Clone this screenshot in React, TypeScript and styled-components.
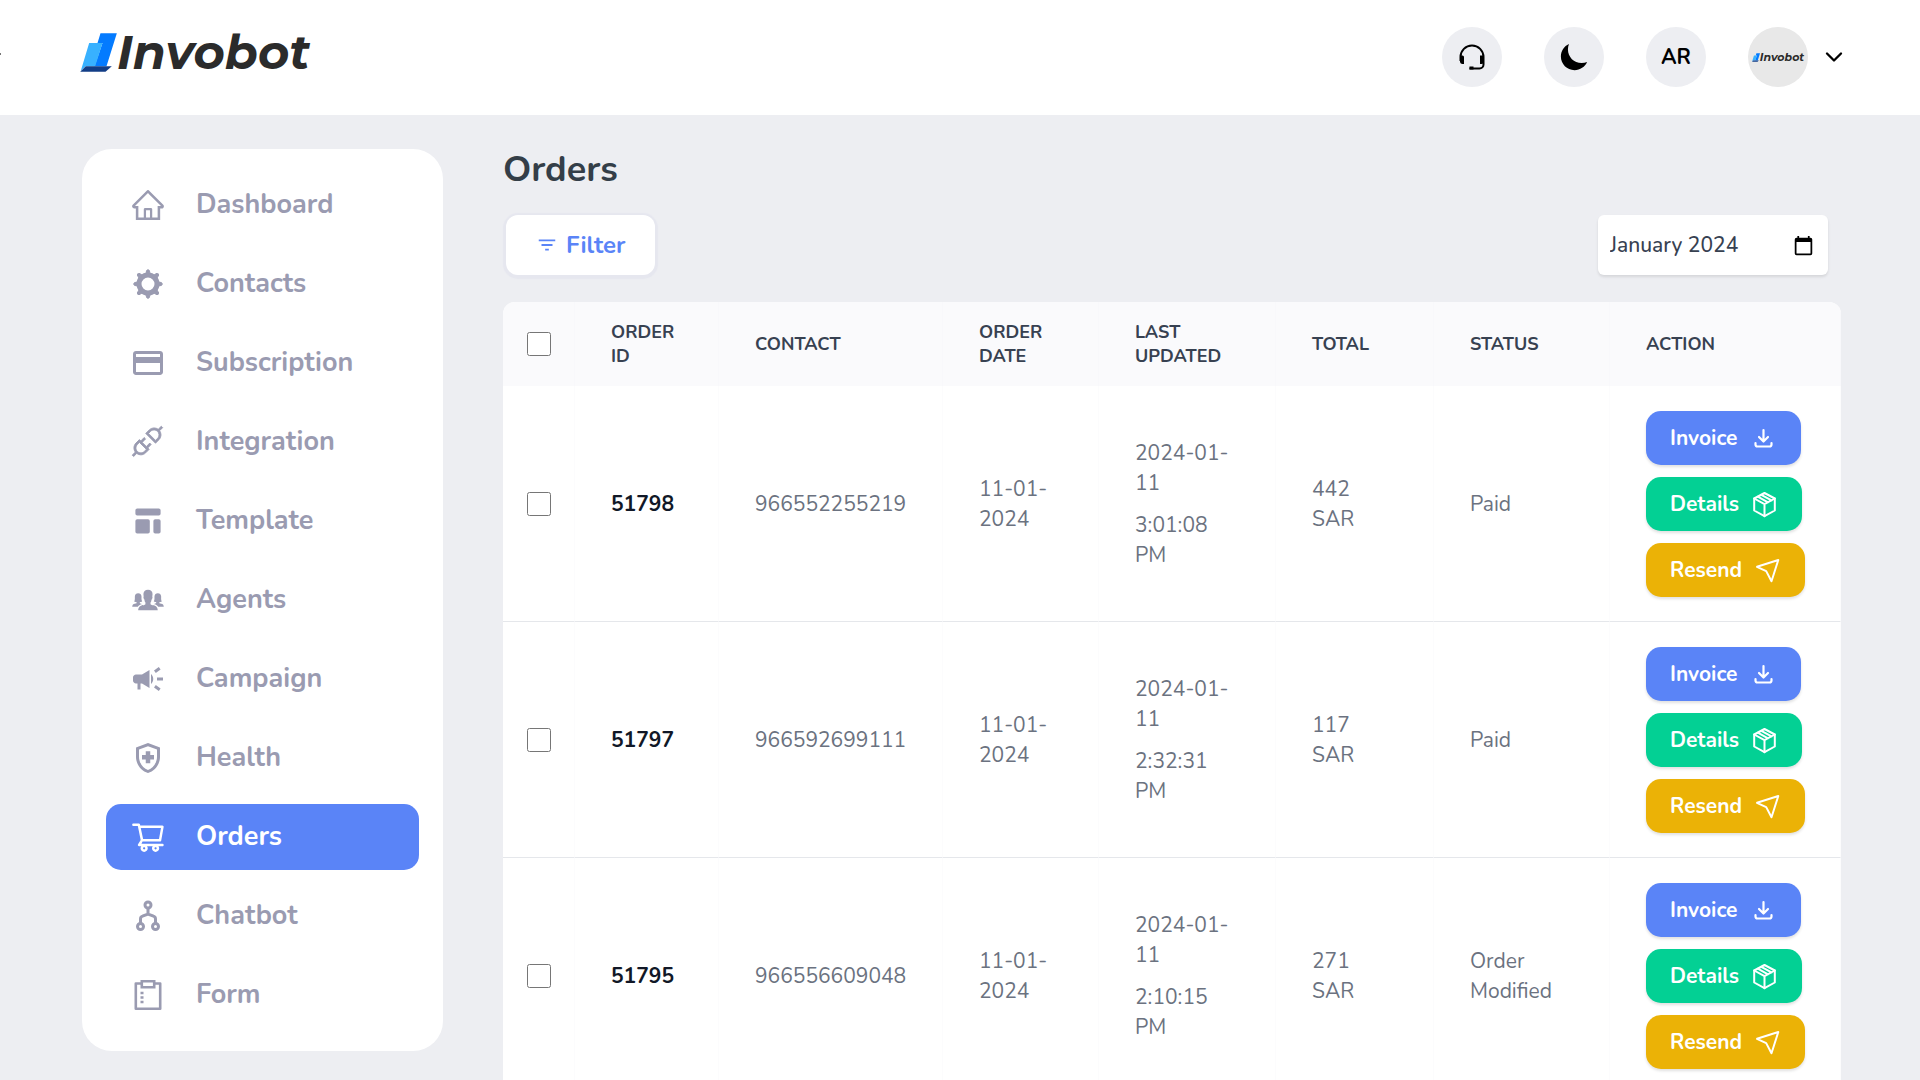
import React from "react";
import styled, { createGlobalStyle, css } from "styled-components";
import { AiOutlineHome, AiOutlineShoppingCart } from "react-icons/ai";
import { FiChevronDown } from "react-icons/fi";
import { HiTemplate } from "react-icons/hi";
import { IoIosPeople } from "react-icons/io";
import { IoMoonSharp } from "react-icons/io5";
import { MdCampaign, MdFilterList, MdOutlineHealthAndSafety, MdPayment } from "react-icons/md";
import { VscDebugDisconnect } from "react-icons/vsc";

const color = {
  page: "#edeef2",
  surface: "#ffffff",
  primary: "#5a84f7",
  success: "#03d094",
  warning: "#ebb206",
  nav: "#9a9bb1",
  heading: "#374151",
  body: "#6b7280",
  strong: "#111827",
};

const GlobalStyle = createGlobalStyle`
  *, *::before, *::after { box-sizing: border-box; }
  body {
    margin: 0;
    background: ${color.page};
    color: ${color.body};
    font-family: "Nunito", "Lato", sans-serif;
    font-size: 21px;
    line-height: 30px;
  }
  button, input { font: inherit; }
`;

/* ---------- header ---------- */

const Header = styled.header`
  position: relative;
  display: flex;
  align-items: center;
  justify-content: space-between;
  height: 115px;
  padding: 0 72px 2px 80px;
  background: ${color.surface};

  &::before {
    content: "";
    position: absolute;
    left: 0;
    top: 53px;
    width: 1px;
    height: 2px;
    background: #777;
  }
`;

const Brand = styled.a<{ $small?: boolean }>`
  display: flex;
  align-items: flex-end;
  color: #2b2b2b;
  font-family: "Montserrat", "Lato", sans-serif;
  font-style: italic;
  font-weight: 700;
  text-decoration: none;
  font-size: ${(p) => (p.$small ? 11 : 48)}px;
  line-height: ${(p) => (p.$small ? 10 : 40)}px;
  padding-bottom: ${(p) => (p.$small ? 0 : 10)}px;

  svg {
    width: ${(p) => (p.$small ? 8 : 37)}px;
    height: ${(p) => (p.$small ? 9 : 39)}px;
  }
`;

const HeaderActions = styled.div`
  display: flex;
  align-items: center;
  gap: 42px;
`;

const RoundButton = styled.button`
  display: flex;
  align-items: center;
  justify-content: center;
  width: 60px;
  height: 60px;
  padding: 0;
  border: 0;
  border-radius: 50%;
  background: ${color.page};
  color: #000;
  font-weight: 700;
`;

const Account = styled.button`
  display: flex;
  align-items: center;
  gap: 12px;
  padding: 0;
  border: 0;
  background: none;
  color: #000;
`;

const Avatar = styled.span`
  display: flex;
  align-items: center;
  justify-content: center;
  width: 60px;
  height: 60px;
  border-radius: 50%;
  background: #e8e8e8;
`;

/* ---------- layout ---------- */

const Page = styled.div`
  display: flex;
  align-items: flex-start;
  gap: 60px;
  padding: 34px 79px 48px 82px;
`;

const Sidebar = styled.nav`
  flex: 0 0 361px;
  padding: 23px 24px;
  border-radius: 30px;
  background: ${color.surface};
`;

const NavList = styled.ul`
  display: flex;
  flex-direction: column;
  gap: 13px;
  margin: 0;
  padding: 0;
  list-style: none;
`;

const NavLink = styled.a<{ $active?: boolean }>`
  display: flex;
  align-items: center;
  gap: 30px;
  height: 66px;
  padding: 0 24px;
  border-radius: 15px;
  color: ${color.nav};
  font-size: 27px;
  font-weight: 700;
  line-height: 36px;
  text-decoration: none;

  svg {
    flex: none;
    width: 36px;
    height: 36px;
  }

  ${(p) =>
    p.$active &&
    css`
      background: ${color.primary};
      color: #fff;
    `}
`;

const PlugIcon = styled(VscDebugDisconnect)`
  overflow: visible;
  stroke-width: 0.4;
`;

const Main = styled.main`
  flex: 1;
  min-width: 0;
`;

const Title = styled.h1`
  margin: 0 0 24px;
  color: #343e48;
  font-size: 36px;
  font-weight: 700;
  line-height: 42px;
`;

const Toolbar = styled.div`
  display: flex;
  align-items: center;
  justify-content: space-between;
  margin-bottom: 27px;
  padding: 0 13px 0 3px;
`;

const FilterButton = styled.button`
  display: flex;
  align-items: center;
  gap: 8px;
  height: 60px;
  padding: 0 30px;
  border: 0;
  border-radius: 12px;
  background: ${color.surface};
  box-shadow: 0 1px 1px 3px #e6e7ef;
  color: ${color.primary};
  font-size: 24px;
  font-weight: 700;
`;

const MonthField = styled.div`
  display: flex;
  align-items: center;
  width: 230px;
  height: 60px;
  padding: 0 12px;
  border-radius: 6px;
  background: ${color.surface};
  box-shadow: 0 2px 3px rgba(0, 0, 0, 0.1);
`;

const MonthInput = styled.input`
  flex: 1;
  min-width: 0;
  padding: 0;
  border: 0;
  background: none;
  color: ${color.heading};
  font-weight: 500;
`;

const PickerButton = styled.button`
  display: flex;
  padding: 0 2px;
  border: 0;
  background: none;
  color: #000;
`;

/* ---------- table ---------- */

const TableCard = styled.div`
  overflow: hidden;
  border-radius: 12px;
  background: ${color.surface};
`;

const Table = styled.table`
  width: 100%;
  table-layout: fixed;
  border-spacing: 0;
  text-align: left;
`;

const HeadCell = styled.th`
  padding: 18px 36px;
  border-right: 1px solid #f8f8fb;
  background: #fafafc;
  color: ${color.heading};
  font-size: 18px;
  font-weight: 700;
  line-height: 24px;
  text-transform: uppercase;
`;

const Cell = styled.td`
  padding: 25px 36px 24px;
  border-right: 1px solid #fcfcfd;
  border-bottom: 1px solid #e5e7eb;
`;

const CheckHead = styled(HeadCell)`
  padding: 0;
  text-align: center;
`;

const CheckCell = styled(Cell)`
  padding: 0;
  text-align: center;
`;

const IdCell = styled(Cell)`
  color: ${color.strong};
  font-weight: 700;
`;

const Checkbox = styled.input`
  display: block;
  width: 24px;
  height: 24px;
  margin: 0 auto;
`;

const Line = styled.span`
  display: block;
`;

const Stamp = styled.div`
  display: grid;
  gap: 12px;
`;

const Actions = styled.div`
  display: flex;
  flex-direction: column;
  align-items: flex-start;
  gap: 12px;
`;

const ActionButton = styled.button<{ $tone: "primary" | "success" | "warning" }>`
  display: flex;
  align-items: center;
  gap: 12px;
  height: 54px;
  padding: 0 24px;
  border: 0;
  border-radius: 15px;
  background: ${(p) => color[p.$tone]};
  box-shadow: 0 2px 3px rgba(0, 0, 0, 0.12);
  color: #fff;
  font-weight: 700;
`;

/* ---------- icons ---------- */

const BrandMark = () => (
  <svg viewBox="241 94 110 117" aria-hidden="true">
    <path d="M302 95h49l-31 99h-36l24-70h-15z" fill="#047bff" />
    <path d="M268 124h40l-22 70h-28l-15 13z" fill="#38b1ff" />
    <path d="M258 194h78l-19 16h-76z" fill="#123d86" />
  </svg>
);

const HeadsetIcon = () => (
  <svg width="26" height="26" viewBox="0 0 26 26" fill="none" stroke="currentColor" strokeWidth="2" aria-hidden="true">
    <path d="M1.5 17v-4a11.5 11.5 0 0 1 23 0v7.5a4 4 0 0 1-4 4H10.5" />
    <path d="M1 11.5h2.500a1.500 1.500 0 0 1 1.500 1.500v7H3.500A2.500 2.500 0 0 1 1 18zM25 11.500h-4V20h1.500A2.500 2.500 0 0 0 25 18z" fill="currentColor" stroke="none" />
    <path d="M10.5 22.500h4v3h-4z" fill="currentColor" stroke="none" />
  </svg>
);

const GearIcon = () => (
  <svg viewBox="0 0 36 36" fill="none" stroke="currentColor" aria-hidden="true">
    <circle cx="18" cy="18" r="9" strokeWidth="5" />
    {[0, 45, 90, 135, 180, 225, 270, 315].map((angle) => (
      <path key={angle} d="M15.8 8.500L16.600 4.500Q18 2.800 19.400 4.500L20.200 8.500z" fill="currentColor" strokeWidth="1" strokeLinejoin="round" transform={`rotate(${angle} 18 18)`} />
    ))}
  </svg>
);

const BranchIcon = () => (
  <svg viewBox="0 0 36 36" fill="none" stroke="currentColor" strokeWidth="3" aria-hidden="true">
    <circle cx="18" cy="7" r="3" />
    <circle cx="10.5" cy="28.5" r="3" />
    <circle cx="25.5" cy="28.5" r="3" />
    <path d="M18 10V16.500M10.500 25.500v-4.500a3 3 0 0 1 2-2.800L18 16l5.500 2.200a3 3 0 0 1 2 2.800V25.500" />
  </svg>
);

const FormIcon = () => (
  <svg viewBox="0 0 36 36" fill="none" stroke="currentColor" strokeWidth="2.6" aria-hidden="true">
    <path d="M12 6.500H5.800v25.200h24.400V6.500H24" strokeLinejoin="round" />
    <path d="M11.800 4.300h12.400v6H11.800z" />
    <path d="M10.500 16h3M10.500 20.500h3M10.500 25h3" />
  </svg>
);

const CalendarIcon = () => (
  <svg width="21" height="21" viewBox="0 0 24 24" fill="currentColor" aria-hidden="true">
    <path d="M20 3h-1V1h-2v2H7V1H5v2H4a2 2 0 0 0-2 2v16a2 2 0 0 0 2 2h16a2 2 0 0 0 2-2V5a2 2 0 0 0-2-2zm0 18H4V8h16z" />
  </svg>
);

const DownloadIcon = () => (
  <svg width="27" height="27" viewBox="0 0 27 27" fill="none" stroke="currentColor" strokeWidth="2.2" strokeLinecap="round" strokeLinejoin="round" aria-hidden="true">
    <path d="M13.500 5v11M9 12l4.500 4.500L18 12" />
    <path d="M5.500 18v1.500a2 2 0 0 0 2 2h12a2 2 0 0 0 2-2V18" />
  </svg>
);

const BoxIcon = () => (
  <svg width="27" height="27" viewBox="0 0 27 27" fill="none" stroke="currentColor" strokeWidth="2" strokeLinecap="round" strokeLinejoin="round" aria-hidden="true">
    <path d="M13.500 2l10.300 5.500v12L13.500 25.200 3.200 19.500v-12z" />
    <path d="M3.200 7.500l10.300 5.700 10.300-5.700M13.500 13.200v12M10.300 3.800l10.200 5.600M6.800 5.700L17 11.300" />
  </svg>
);

const SendIcon = () => (
  <svg width="27" height="27" viewBox="0 0 27 27" fill="none" stroke="currentColor" strokeWidth="2" strokeLinejoin="round" aria-hidden="true">
    <path d="M3 9.800L24.300 3l-6.800 21.300-5.300-10.200z" />
  </svg>
);

/* ---------- data ---------- */

const navItems = [
  { label: "Dashboard", icon: <AiOutlineHome /> },
  { label: "Contacts", icon: <GearIcon /> },
  { label: "Subscription", icon: <MdPayment /> },
  { label: "Integration", icon: <PlugIcon /> },
  { label: "Template", icon: <HiTemplate /> },
  { label: "Agents", icon: <IoIosPeople /> },
  { label: "Campaign", icon: <MdCampaign /> },
  { label: "Health", icon: <MdOutlineHealthAndSafety /> },
  { label: "Orders", icon: <AiOutlineShoppingCart />, active: true },
  { label: "Chatbot", icon: <BranchIcon /> },
  { label: "Form", icon: <FormIcon /> },
];

const columns = [
  { label: "Order ID", width: 144 },
  { label: "Contact", width: 224 },
  { label: "Order Date", width: 156 },
  { label: "Last Updated", width: 177 },
  { label: "Total", width: 158 },
  { label: "Status", width: 176 },
  { label: "Action", width: 231 },
];

const orders = [
  { id: "51798", contact: "966552255219", date: "11-01-2024", day: "2024-01-11", time: "3:01:08", total: "442", status: "Paid" },
  { id: "51797", contact: "966592699111", date: "11-01-2024", day: "2024-01-11", time: "2:32:31", total: "117", status: "Paid" },
  { id: "51795", contact: "966556609048", date: "11-01-2024", day: "2024-01-11", time: "2:10:15", total: "271", status: "Order Modified" },
];

export default function App() {
  return (
    <>
      <GlobalStyle />
      <Header>
        <Brand href="#">
          <BrandMark />
          Invobot
        </Brand>
        <HeaderActions>
          <RoundButton type="button" aria-label="Support"><HeadsetIcon /></RoundButton>
          <RoundButton type="button" aria-label="Dark mode"><IoMoonSharp size={30} /></RoundButton>
          <RoundButton type="button">AR</RoundButton>
          <Account type="button" aria-label="Account menu">
            <Avatar>
              <Brand as="span" $small>
                <BrandMark />
                Invobot
              </Brand>
            </Avatar>
            <FiChevronDown size={28} />
          </Account>
        </HeaderActions>
      </Header>
      <Page>
        <Sidebar aria-label="Main">
          <NavList>
            {navItems.map((item) => (
              <li key={item.label}>
                <NavLink href="#" $active={item.active} aria-current={item.active ? "page" : undefined}>
                  {item.icon}
                  {item.label}
                </NavLink>
              </li>
            ))}
          </NavList>
        </Sidebar>
        <Main>
          <Title>Orders</Title>
          <Toolbar>
            <FilterButton type="button">
              <MdFilterList size={22} />
              Filter
            </FilterButton>
            <MonthField>
              <MonthInput type="text" aria-label="Month" defaultValue="January 2024" />
              <PickerButton type="button" aria-label="Show month picker"><CalendarIcon /></PickerButton>
            </MonthField>
          </Toolbar>
          <TableCard>
            <Table>
              <colgroup>
                <col width={72} />
                {columns.map((c) => (
                  <col key={c.label} width={c.width} />
                ))}
              </colgroup>
              <thead>
                <tr>
                  <CheckHead scope="col"><Checkbox type="checkbox" aria-label="Select all orders" /></CheckHead>
                  {columns.map((c) => (
                    <HeadCell key={c.label} scope="col">
                      {c.label.split(" ").map((word) => (
                        <Line key={word}>{word}</Line>
                      ))}
                    </HeadCell>
                  ))}
                </tr>
              </thead>
              <tbody>
                {orders.map((o) => (
                  <tr key={o.id}>
                    <CheckCell><Checkbox type="checkbox" aria-label={`Select order ${o.id}`} /></CheckCell>
                    <IdCell>{o.id}</IdCell>
                    <Cell>{o.contact}</Cell>
                    <Cell>{o.date}</Cell>
                    <Cell>
                      <Stamp>
                        <span>{o.day}</span>
                        <span>
                          <Line>{o.time}</Line>
                          <Line>PM</Line>
                        </span>
                      </Stamp>
                    </Cell>
                    <Cell>
                      <Line>{o.total}</Line>
                      <Line>SAR</Line>
                    </Cell>
                    <Cell>{o.status}</Cell>
                    <Cell>
                      <Actions>
                        <ActionButton type="button" $tone="primary">Invoice <DownloadIcon /></ActionButton>
                        <ActionButton type="button" $tone="success">Details <BoxIcon /></ActionButton>
                        <ActionButton type="button" $tone="warning">Resend <SendIcon /></ActionButton>
                      </Actions>
                    </Cell>
                  </tr>
                ))}
              </tbody>
            </Table>
          </TableCard>
        </Main>
      </Page>
    </>
  );
}
